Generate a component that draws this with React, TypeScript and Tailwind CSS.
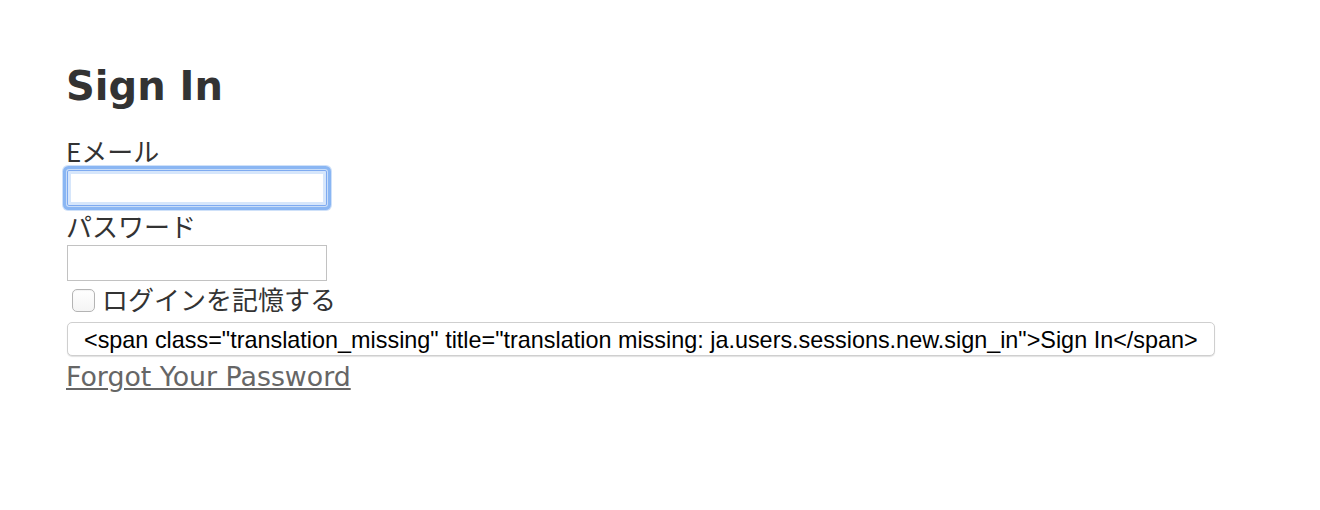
import React from "react";

export default function App() {
  const jp = "font-['Noto_Sans_CJK_JP','Noto_Sans',sans-serif]";
  return (
    <div className="w-[1320px] h-[510px] bg-white pl-[66px] pt-[62px] text-[#333]">
      <h1 className="font-['DejaVu_Sans',Verdana,sans-serif] font-bold text-[40px] leading-[48px] mb-[21px]">
        Sign In
      </h1>
      <div className={`${jp} text-[26px] leading-[39px] h-[39px]`}>Eメール</div>
      <div className="ml-px w-[260px] h-[36px] border border-[#7eaaf0] rounded-[2px] bg-white shadow-[inset_0_0_0_3px_#d6e6fb,0_0_0_1px_#c9ddf8,0_0_0_4px_#8ab6f3,0_0_0_5px_#cfe1f9]" />
      <div className={`${jp} text-[26px] leading-[39px] h-[39px]`}>パスワード</div>
      <div className="ml-px w-[260px] h-[36px] border border-[#c2c2c2] bg-white" />
      <div className="flex items-start h-[41px]">
        <div className="ml-[6px] mt-[8px] w-[23px] h-[23px] rounded-[5px] border border-[#b4b4b4] bg-gradient-to-b from-white to-[#f4f4f4] shadow-[inset_0_1px_1px_rgba(0,0,0,0.05)]" />
        <span className={`${jp} text-[26px] leading-[35px] ml-[7px]`}>ログインを記憶する</span>
      </div>
      <div className="ml-px inline-flex items-center h-[34px] px-[16px] pt-[3px] border border-[#cfcfcf] rounded-[5px] bg-white shadow-[0_1px_1px_rgba(0,0,0,0.12)] font-['Liberation_Sans',Arial,sans-serif] text-[23.4px] text-black whitespace-nowrap">
        {'<span class="translation_missing" title="translation missing: ja.users.sessions.new.sign_in">Sign In</span>'}
      </div>
      <div className="mt-[6px]">
        <a
          href="#"
          className="font-['DejaVu_Sans',Verdana,sans-serif] text-[26.8px] leading-[30px] text-[#666] underline"
        >
          Forgot Your Password
        </a>
      </div>
    </div>
  );
}
